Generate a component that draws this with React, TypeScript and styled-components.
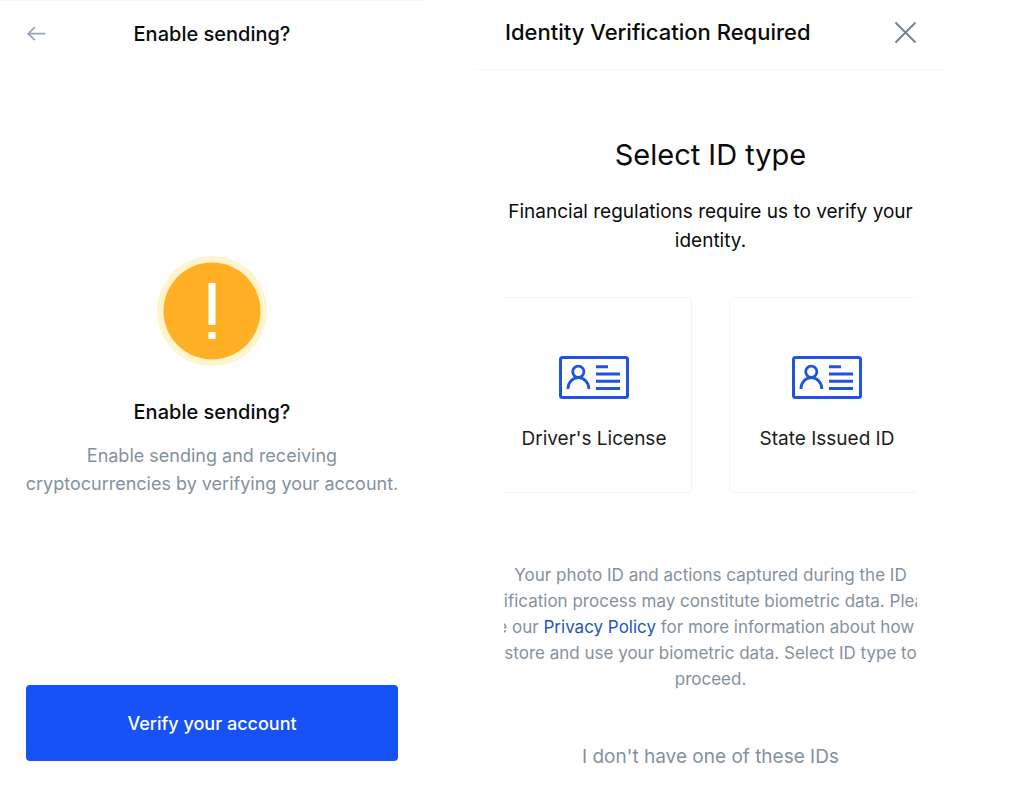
import React from "react";
import styled, { createGlobalStyle } from "styled-components";

const GlobalStyle = createGlobalStyle`
  *, *::before, *::after { box-sizing: border-box; }
  body {
    margin: 0;
    background: #fff;
    color: #0a0b0d;
    font-family: Inter, "Liberation Sans", sans-serif;
  }
  h1, h2, p { margin: 0; }
  button { font-family: inherit; cursor: pointer; }
`;

const Page = styled.main`
  display: grid;
  grid-template-columns: 424fr 471fr;
  column-gap: 50px;
  min-height: 100vh;
  padding-right: 79px;
`;

const Screen = styled.section`
  display: flex;
  flex-direction: column;
  min-width: 0;
`;

const SendingScreen = styled(Screen)`
  border-top: 1px solid #f4f5f6;
`;

const SendingHeader = styled.header`
  display: grid;
  grid-template-columns: 46px 1fr 46px;
  align-items: center;
  height: 66px;
`;

const VerifyHeader = styled.header`
  display: flex;
  align-items: center;
  justify-content: space-between;
  height: 70px;
  padding: 0 28px 6px 31px;
  border-bottom: 1px solid #f6f7f8;
`;

const Heading = styled.h1<{ $size: number }>`
  font-size: ${(p) => p.$size}px;
  line-height: 28px;
  font-weight: 500;
  text-align: center;
`;

const IconButton = styled.button<{ $color: string }>`
  display: flex;
  justify-content: flex-end;
  padding: 0;
  border: 0;
  background: none;
  color: ${(p) => p.$color};
`;

const Notice = styled.div`
  display: flex;
  flex-direction: column;
  align-items: center;
  padding-top: 189px;
  text-align: center;
`;

const NoticeTitle = styled.h2`
  margin-top: 32px;
  font-size: 20px;
  line-height: 28px;
  font-weight: 500;
`;

const NoticeText = styled.p`
  margin-top: 16px;
  color: #84919d;
  font-size: 18px;
  line-height: 28px;
`;

const Footer = styled.footer`
  margin-top: auto;
  padding: 24px 26px 43px;
`;

const PrimaryButton = styled.button`
  width: 100%;
  height: 76px;
  border: 0;
  border-radius: 4px;
  background: #1652f5;
  color: #fff;
  font-size: 18px;
  font-weight: 500;
`;

const Content = styled.div`
  display: flex;
  flex-direction: column;
  align-items: center;
  margin: 0 28px 0 30px;
  padding-top: 65px;
  overflow: hidden;
  text-align: center;
`;

const ContentTitle = styled.h2`
  font-size: 29px;
  line-height: 40px;
  font-weight: 400;
`;

const Lead = styled.p`
  margin-top: 22px;
  font-size: 19px;
  line-height: 29px;
  white-space: nowrap;
`;

const CardRow = styled.div`
  display: flex;
  flex: none;
  gap: 37px;
  margin-top: 42px;
`;

const Card = styled.button`
  display: flex;
  flex-direction: column;
  align-items: center;
  width: 196px;
  height: 196px;
  padding: 58px 0 0;
  border: 1px solid #f4f5f6;
  border-radius: 4px;
  background: #fff;
  color: #1b1d21;
  font-size: 19px;
  line-height: 28px;
`;

const CardLabel = styled.span`
  margin-top: 26px;
`;

const Legal = styled.p`
  margin-top: 69px;
  color: #84919d;
  font-size: 17px;
  line-height: 26px;
  white-space: nowrap;
`;

const PolicyLink = styled.a`
  color: #2456b8;
  text-decoration: none;
`;

const TextButton = styled.button`
  margin-top: 51px;
  padding: 0;
  border: 0;
  background: none;
  color: #84919d;
  font-size: 19px;
  line-height: 28px;
`;

const BackIcon = () => (
  <svg width="20" height="16" viewBox="0 0 20 16" fill="none" stroke="currentColor" strokeWidth="1.7" aria-hidden="true">
    <path d="M19.200 7.700H2M8.800 1.200L2.200 7.700l6.600 6.500" />
  </svg>
);

const CloseIcon = () => (
  <svg width="24" height="24" viewBox="0 0 24 24" fill="none" stroke="currentColor" strokeWidth="1.8" aria-hidden="true">
    <path d="M2.500 2.500l20 20M22.500 2.500l-20 20" />
  </svg>
);

const WarningIcon = () => (
  <svg width="110" height="110" viewBox="0 0 110 110" aria-hidden="true">
    <circle cx="55" cy="55" r="55" fill="#fff4cc" />
    <circle cx="55" cy="55" r="48.5" fill="#ffb024" />
    <path d="M51.500 27h7v42h-7zM51.500 76h7v7h-7z" fill="#fff" />
  </svg>
);

const IdCardIcon = () => (
  <svg width="70" height="43" viewBox="0 0 70 43" fill="none" stroke="#1f55dc" strokeWidth="3" aria-hidden="true">
    <rect x="1.5" y="1.5" width="67" height="40" rx="2" />
    <circle cx="19.3" cy="15.700" r="5.600" strokeWidth="2.800" />
    <path d="M8.900 33c0-6.400 4.500-11.300 10.400-11.300S29.900 26.600 29.900 33" strokeWidth="2.800" />
    <path d="M37 10.700h12M37 18h24M37 25.300h24M37 32.600h24" strokeWidth="3" />
  </svg>
);

const idTypes = ["Driver's License", "State Issued ID"];

export default function App() {
  return (
    <>
      <GlobalStyle />
      <Page>
        <SendingScreen>
          <SendingHeader>
            <IconButton type="button" aria-label="Back" $color="#98a4b8">
              <BackIcon />
            </IconButton>
            <Heading $size={20}>Enable sending?</Heading>
          </SendingHeader>
          <Notice>
            <WarningIcon />
            <NoticeTitle>Enable sending?</NoticeTitle>
            <NoticeText>
              Enable sending and receiving
              <br />
              cryptocurrencies by verifying your account.
            </NoticeText>
          </Notice>
          <Footer>
            <PrimaryButton type="button">Verify your account</PrimaryButton>
          </Footer>
        </SendingScreen>

        <Screen>
          <VerifyHeader>
            <Heading $size={22}>Identity Verification Required</Heading>
            <IconButton type="button" aria-label="Close" $color="#708096">
              <CloseIcon />
            </IconButton>
          </VerifyHeader>
          <Content>
            <ContentTitle>Select ID type</ContentTitle>
            <Lead>
              Financial regulations require us to verify your
              <br />
              identity.
            </Lead>
            <CardRow>
              {idTypes.map((label) => (
                <Card type="button" key={label}>
                  <IdCardIcon />
                  <CardLabel>{label}</CardLabel>
                </Card>
              ))}
            </CardRow>
            <Legal>
              Your photo ID and actions captured during the ID
              <br />
              verification process may constitute biometric data. Please
              <br />
              see our <PolicyLink href="#privacy">Privacy Policy</PolicyLink> for more information about how we
              <br />
              store and use your biometric data. Select ID type to
              <br />
              proceed.
            </Legal>
            <TextButton type="button">I don't have one of these IDs</TextButton>
          </Content>
        </Screen>
      </Page>
    </>
  );
}
